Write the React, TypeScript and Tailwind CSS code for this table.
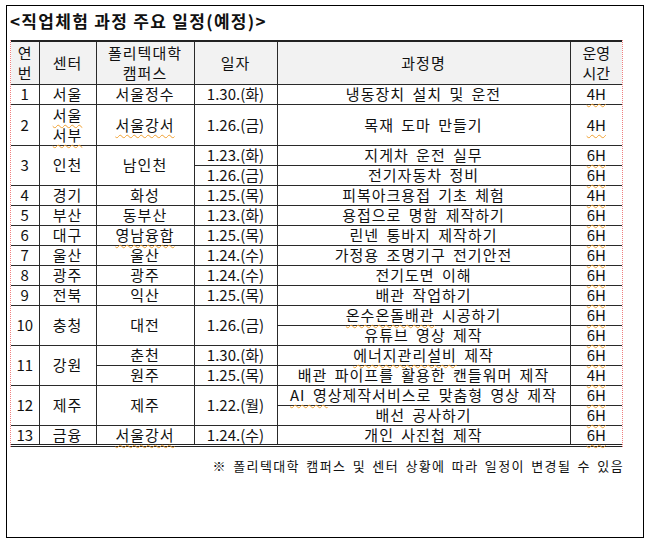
import React from 'react';

const W = 'underline decoration-wavy decoration-[#f0a030] decoration-1 underline-offset-[3px]';

const td = 'p-0 text-center align-middle border border-[#2a2a2a] whitespace-nowrap tracking-[1px]';
const num = 'p-0 text-center align-middle border border-[#2a2a2a] whitespace-nowrap';
const first = 'p-0 text-center align-middle border-y border-[#2a2a2a] whitespace-nowrap';
const last = 'p-0 text-center align-middle border-y border-l border-[#2a2a2a] whitespace-nowrap';

const Hours: React.FC<{ v: string }> = ({ v }) => <span className={W}>{v}</span>;

export default function App() {
  return (
    <div
      className="w-[647px] h-[548px] bg-white text-[#111] pt-[5px] pl-[6px]"
      style={{ fontFamily: '"Noto Sans CJK KR", "Noto Sans", sans-serif' }}
    >
      <div className="w-[638px] h-[533px] border-[1.5px] border-black">
        <h1 className="text-[17px] font-bold leading-[22px] pt-[4px] pl-[3px] tracking-[1.3px]">
          &lt;직업체험 과정 주요 일정(예정)&gt;
        </h1>

        <div className="mt-[8px] ml-[3px] w-[613px] border-x border-dotted border-[#f08080]">
          <table className="w-[611px] table-fixed border-collapse text-[15px] leading-[18px] [word-spacing:3px]">
            <colgroup>
              <col className="w-[28px]" />
              <col className="w-[57px]" />
              <col className="w-[98px]" />
              <col className="w-[83px]" />
              <col className="w-[293px]" />
              <col className="w-[52px]" />
            </colgroup>
            <thead>
              <tr className="h-[43px] bg-[#f2f2f2] border-t-2 border-[#222]">
                <th className={`${first} font-normal leading-[20px]`}>연<br />번</th>
                <th className={`${td} font-normal`}>센터</th>
                <th className={`${td} font-normal leading-[20px]`}>폴리텍대학<br />캠퍼스</th>
                <th className={`${td} font-normal`}>일자</th>
                <th className={`${td} font-normal`}>과정명</th>
                <th className={`${last} font-normal leading-[20px]`}>운영<br />시간</th>
              </tr>
            </thead>
            <tbody>
              <tr className="h-[20px]">
                <td className={first}>1</td>
                <td className={td}>서울</td>
                <td className={td}>서울정수</td>
                <td className={num}>1.30.(화)</td>
                <td className={td}>냉동장치 설치 및 운전</td>
                <td className={last}><Hours v="4H" /></td>
              </tr>
              <tr className="h-[41px]">
                <td className={first}>2</td>
                <td className={`${td} leading-[20px]`}>
                  <span className={W}>서울</span>
                  <br />
                  <span className={W}>서부</span>
                </td>
                <td className={td}><span className={W}>서울강서</span></td>
                <td className={num}>1.26.(금)</td>
                <td className={td}>목재 도마 만들기</td>
                <td className={last}><Hours v="4H" /></td>
              </tr>
              <tr className="h-[20px]">
                <td className={first} rowSpan={2}>3</td>
                <td className={td} rowSpan={2}>인천</td>
                <td className={td} rowSpan={2}>남인천</td>
                <td className={num}>1.23.(화)</td>
                <td className={td}>지게차 운전 실무</td>
                <td className={last}><Hours v="6H" /></td>
              </tr>
              <tr className="h-[20px]">
                <td className={num}>1.26.(금)</td>
                <td className={td}>전기자동차 정비</td>
                <td className={last}><Hours v="6H" /></td>
              </tr>
              <tr className="h-[20px]">
                <td className={first}>4</td>
                <td className={td}>경기</td>
                <td className={td}>화성</td>
                <td className={num}>1.25.(목)</td>
                <td className={td}>피복아크용접 기초 체험</td>
                <td className={last}><Hours v="4H" /></td>
              </tr>
              <tr className="h-[20px]">
                <td className={first}>5</td>
                <td className={td}>부산</td>
                <td className={td}>동부산</td>
                <td className={num}>1.23.(화)</td>
                <td className={td}>용접으로 명함 제작하기</td>
                <td className={last}><Hours v="6H" /></td>
              </tr>
              <tr className="h-[20px]">
                <td className={first}>6</td>
                <td className={td}>대구</td>
                <td className={td}><span className={W}>영남융합</span></td>
                <td className={num}>1.25.(목)</td>
                <td className={td}>린넨 통바지 제작하기</td>
                <td className={last}><Hours v="6H" /></td>
              </tr>
              <tr className="h-[20px]">
                <td className={first}>7</td>
                <td className={td}>울산</td>
                <td className={td}>울산</td>
                <td className={num}>1.24.(수)</td>
                <td className={td}>가정용 조명기구 전기안전</td>
                <td className={last}><Hours v="6H" /></td>
              </tr>
              <tr className="h-[20px]">
                <td className={first}>8</td>
                <td className={td}>광주</td>
                <td className={td}>광주</td>
                <td className={num}>1.24.(수)</td>
                <td className={td}>전기도면 이해</td>
                <td className={last}><Hours v="6H" /></td>
              </tr>
              <tr className="h-[20px]">
                <td className={first}>9</td>
                <td className={td}>전북</td>
                <td className={td}>익산</td>
                <td className={num}>1.25.(목)</td>
                <td className={td}>배관 작업하기</td>
                <td className={last}><Hours v="6H" /></td>
              </tr>
              <tr className="h-[20px]">
                <td className={first} rowSpan={2}>10</td>
                <td className={td} rowSpan={2}>충청</td>
                <td className={td} rowSpan={2}>대전</td>
                <td className={num} rowSpan={2}>1.26.(금)</td>
                <td className={td}><span className={W}>온수온돌배관</span> 시공하기</td>
                <td className={last}><Hours v="6H" /></td>
              </tr>
              <tr className="h-[20px]">
                <td className={td}>유튜브 영상 제작</td>
                <td className={last}><Hours v="6H" /></td>
              </tr>
              <tr className="h-[20px]">
                <td className={first} rowSpan={2}>11</td>
                <td className={td} rowSpan={2}>강원</td>
                <td className={td}>춘천</td>
                <td className={num}>1.30.(화)</td>
                <td className={td}><span className={W}>에너지관리설비</span> 제작</td>
                <td className={last}><Hours v="6H" /></td>
              </tr>
              <tr className="h-[20px]">
                <td className={td}>원주</td>
                <td className={num}>1.25.(목)</td>
                <td className={td}>배관 파이프를 활용한 캔들워머 제작</td>
                <td className={last}><Hours v="4H" /></td>
              </tr>
              <tr className="h-[20px]">
                <td className={first} rowSpan={2}>12</td>
                <td className={td} rowSpan={2}>제주</td>
                <td className={td} rowSpan={2}>제주</td>
                <td className={num} rowSpan={2}>1.22.(월)</td>
                <td className={td}><span className={W}>AI 영</span>상제작서비스로 맞춤형 영상 제작</td>
                <td className={last}><Hours v="6H" /></td>
              </tr>
              <tr className="h-[20px]">
                <td className={td}>배선 공사하기</td>
                <td className={last}><Hours v="6H" /></td>
              </tr>
              <tr className="h-[20px] border-b-[3px] border-double border-[#222]">
                <td className={first}>13</td>
                <td className={td}>금융</td>
                <td className={td}><span className={W}>서울강서</span></td>
                <td className={num}>1.24.(수)</td>
                <td className={td}>개인 사진첩 제작</td>
                <td className={last}><Hours v="6H" /></td>
              </tr>
            </tbody>
          </table>
        </div>

        <p className="mt-[10px] w-[617px] text-right text-[13px] leading-[18px] tracking-[1.4px] [word-spacing:2px]">
          ※ 폴리텍대학 캠퍼스 및 센터 상황에 따라 일정이 변경될 수 있음
        </p>
      </div>
    </div>
  );
}
